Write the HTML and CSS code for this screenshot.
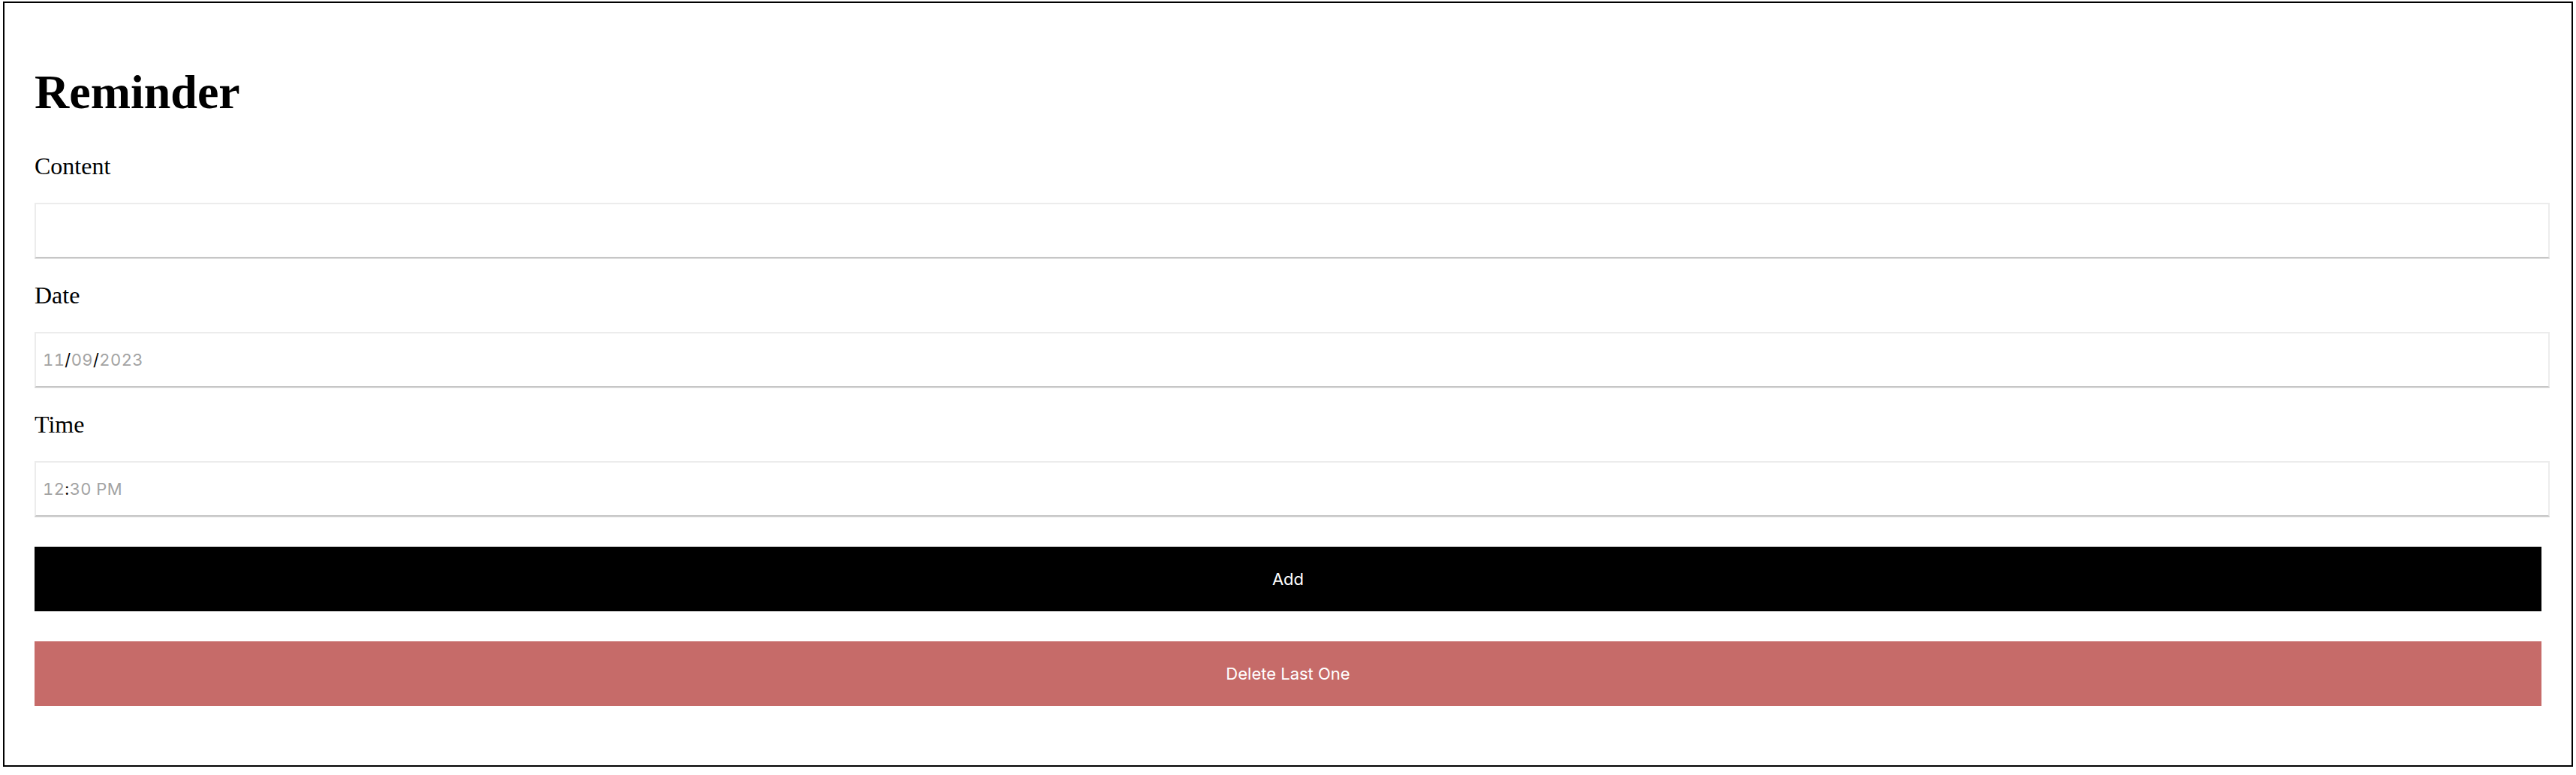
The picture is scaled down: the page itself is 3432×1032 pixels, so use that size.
FILE: index.html
```html
<!DOCTYPE html>
<html lang="en">
<head>
<meta charset="utf-8">
<title>Reminder</title>
<link rel="stylesheet" href="styles.css">
</head>
<body>
<main class="card">
  <h1 class="title">Reminder</h1>
  <label class="field-label" for="content">Content</label>
  <input class="field" id="content" type="text">
  <label class="field-label">Date</label>
  <div class="field field-value"><span class="seg">11</span><span class="sep">/</span><span class="seg">09</span><span class="sep">/</span><span class="seg">2023</span></div>
  <label class="field-label">Time</label>
  <div class="field field-value"><span class="seg">12</span><span class="sep">:</span><span class="seg">30</span><span class="seg"> PM</span></div>
  <button class="btn btn-add" type="button">Add</button>
  <button class="btn btn-delete" type="button">Delete Last One</button>
</main>
</body>
</html>
```

FILE: styles.css
```css
html, body {
  margin: 0;
  padding: 0;
  background: #ffffff;
}

.card {
  display: block;
  margin: 2px 4px 0 4px;
  border: 2px solid #000000;
  padding: 40px 40px 79px 40px;
  font-family: "Liberation Serif", "Times New Roman", serif;
  color: #000000;
}

.title {
  font-family: "Liberation Serif", "Times New Roman", serif;
  font-weight: bold;
  font-size: 64px;
  line-height: 74px;
  margin: 42px 0 43px 0;
}

.field-label {
  display: block;
  font-size: 32px;
  line-height: 37px;
  margin: 31px 0 30px 0;
}

.field {
  display: block;
  box-sizing: border-box;
  width: calc(100% + 11px);
  height: 74px;
  margin: 0;
  padding: 0 0 0 9px;
  border: 2px solid #ececec;
  border-bottom: 2px solid #c6c6c6;
  box-shadow: 0 1px 0 #e6e6e6;
  background: #ffffff;
  outline: none;
  font-family: "Inter", "Liberation Sans", sans-serif;
  font-size: 22px;
}

.field-value {
  line-height: 70px;
  white-space: pre;
  color: #a3a3a3;
  letter-spacing: 0.4px;
  font-variant-numeric: tabular-nums;
}

.seg {
  color: #a3a3a3;
}

.sep {
  color: #000000;
}

.btn {
  display: block;
  width: 100%;
  height: 86px;
  margin: 40px 0 0 0;
  border: none;
  padding: 0;
  color: #ffffff;
  font-family: "Inter", "Liberation Sans", sans-serif;
  font-size: 22px;
  text-align: center;
  cursor: pointer;
}

.btn-add {
  background: #000000;
}

.btn-delete {
  background: #c66b69;
}
```
